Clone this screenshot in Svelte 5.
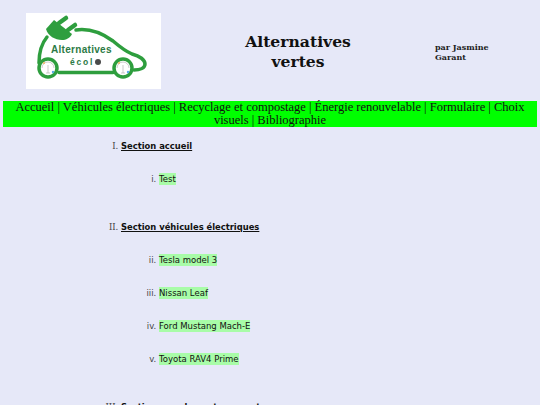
<script>
  const navLinks = ["Accueil", "Véhicules électriques", "Recyclage et compostage", "Énergie renouvelable", "Formulaire", "Choix visuels", "Bibliographie"];
  const sections = [
    { title: "Section accueil", items: ["Test"] },
    { title: "Section véhicules électriques", items: ["Tesla model 3", "Nissan Leaf", "Ford Mustang Mach-E", "Toyota RAV4 Prime"] },
    { title: "Section recyclage et compostage", items: [] }
  ];

  // the sub list keeps counting from one section to the next
  function startOf(index) {
    let n = 1;
    for (let i = 0; i < index; i++) n += sections[i].items.length;
    return n;
  }
</script>

<header class="top">
  <div class="logo">
    <svg viewBox="0 0 135 76" width="135" height="76">
      <g fill="none" stroke="#2e9e3e" stroke-linecap="round">
        <path d="M21 24C16 30 13 38 13 50" stroke-width="3.5" />
        <path d="M50 17C64 15 76 20 87 28C94 34 99 38 106 41C114 43 119 47 119 51C119 55 114 57 108 57" stroke-width="3.5" />
        <path d="M33 59.5H87" stroke-width="3.5" />
        <path d="M33 10L40 5M42 17L49 12" stroke-width="4.5" />
      </g>
      <path d="M20 16L28 7L46 21C44 25 40 27 36 27C29 27 22 23 20 16Z" fill="#2e9e3e" />
      <circle cx="22" cy="55" r="9" fill="#fff" stroke="#2e9e3e" stroke-width="3.5" />
      <circle cx="97" cy="55" r="9" fill="#fff" stroke="#2e9e3e" stroke-width="3.5" />
      <g fill="none" stroke="#aaa" stroke-width="0.6">
        <path d="M16 55A6 6 0 0 1 28 55M22 52V60M20 60H24" />
        <path d="M91 55A6 6 0 0 1 103 55M97 52V60M95 60H99" />
      </g>
      <circle cx="18" cy="50" r="1" fill="#f2b25c" />
      <circle cx="27" cy="59" r="1.2" fill="#5aa9e6" />
      <circle cx="93" cy="50" r="1" fill="#f2b25c" />
      <circle cx="102" cy="59" r="1.2" fill="#5aa9e6" />
      <text x="25" y="40" class="logo-a">Alternatives</text>
      <text x="44" y="52" class="logo-b">écol</text>
      <circle cx="72" cy="49" r="3" fill="#4a4a4a" />
    </svg>
  </div>
  <h1>Alternatives vertes</h1>
  <p class="author">par Jasmine Garant</p>
</header>

<nav>
  {navLinks.join(" | ")}
</nav>

<main>
  <ol class="sections" type="I">
    {#each sections as section, s}
      <li>
        <span class="section-title">{section.title}</span>
        {#if section.items.length}
          <ol class="subs" type="i" start={startOf(s)}>
            {#each section.items as item}
              <li><span class="item">{item}</span></li>
            {/each}
          </ol>
        {/if}
      </li>
    {/each}
  </ol>
</main>

<style>
  :global(body) {
    background: #e6e8f8;
    overflow: hidden;
    height: 405px;
  }

  .top {
    display: flex;
    align-items: flex-start;
    height: 101px;
  }
  .logo {
    margin: 13px 0 0 26px;
    width: 135px;
    height: 76px;
    background: #fff;
    flex-shrink: 0;
  }
  .logo svg {
    display: block;
  }
  .logo-a {
    font: bold 10px "Liberation Sans", sans-serif;
    fill: #2c7a45;
    letter-spacing: 0.3px;
  }
  .logo-b {
    font: bold 8.5px "Liberation Sans", sans-serif;
    fill: #2c7a45;
    letter-spacing: 1.8px;
  }
  h1 {
    margin: 32px 0 0 74px;
    width: 126px;
    text-align: center;
    font: bold 15.6px/20px "DejaVu Serif", serif;
    color: #111;
  }
  .author {
    margin: 42px 0 0 74px;
    width: 70px;
    font: bold 8px/10px "DejaVu Serif", serif;
    color: #222;
  }

  nav {
    margin: 0 3px;
    background: #00ff00;
    text-align: center;
    font: 12.5px/13px "Liberation Serif", serif;
    color: #111;
    padding: 0 10px;
  }

  main {
    font: 8.5px/12px "DejaVu Sans", sans-serif;
    color: #111;
  }
  .sections {
    margin: 13px 0 0;
    padding: 0 0 0 121px;
  }
  .sections > li {
    margin-bottom: 36px;
  }
  .sections > li::marker {
    font-family: "DejaVu Serif", serif;
    color: #444;
  }
  .section-title {
    font-weight: bold;
    font-size: 8.4px;
    text-decoration: underline;
  }
  .subs {
    margin: 0;
    padding: 0 0 0 38px;
  }
  .subs li {
    margin-top: 21px;
  }
  .subs li::marker {
    color: #444;
  }
  .item {
    background: #a8fca8;
    padding: 1px 0;
  }
</style>
